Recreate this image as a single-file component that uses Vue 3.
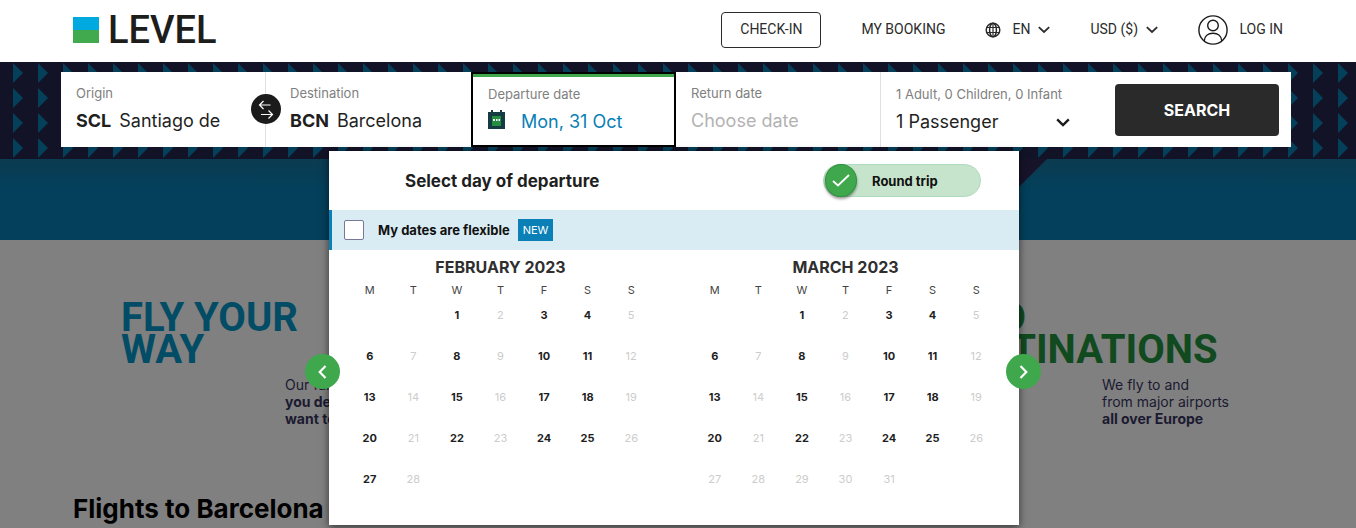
<script setup>
import { ref } from 'vue'

const weekdays = ['M', 'T', 'W', 'T', 'F', 'S', 'S']

function buildMonth(name, total, lastOpen) {
  const weeks = []
  for (let start = -1; start <= total; start += 7) {
    const week = []
    for (let i = 0; i < 7; i++) {
      const day = start + i
      const inMonth = day >= 1 && day <= total
      const open = [0, 2, 4, 5].includes(i) && day <= lastOpen
      week.push({ day: inMonth ? day : null, open })
    }
    weeks.push(week)
  }
  return { name, weeks }
}

const months = [buildMonth('FEBRUARY 2023', 28, 28), buildMonth('MARCH 2023', 31, 25)]

const origin = ref('Santiago de')
const destination = ref('Barcelona')
const departure = ref('Mon, 31 Oct')
const flexible = ref(false)
const roundTrip = ref(true)
</script>

<template>
  <div class="page">
    <header class="topbar">
      <a class="logo" href="#" aria-label="LEVEL">
        <span class="mark"></span>
        <span class="wordmark">LEVEL</span>
      </a>
      <nav class="nav">
        <a class="checkin" href="#">CHECK-IN</a>
        <a class="booking" href="#">MY BOOKING</a>
        <label class="picker language">
          <svg width="16" height="16" viewBox="0 0 16 16" fill="none" stroke="#2b2b2b" stroke-width="1.5">
            <circle cx="8" cy="8" r="6.800" />
            <ellipse cx="8" cy="8" rx="3.400" ry="6.800" />
            <path d="M8 1v14M1.800 5.500h12.400M1.800 10.500h12.400" stroke-width="1.200" />
          </svg>
          <select aria-label="Language"><option>EN</option></select>
          <svg class="chevron" width="12" height="8" viewBox="0 0 12 8" fill="none" stroke="#2b2b2b" stroke-width="1.800"><path d="M.8 1.200 6 6l5.200-4.800" /></svg>
        </label>
        <label class="picker">
          <select aria-label="Currency"><option>USD ($)</option></select>
          <svg class="chevron" width="12" height="8" viewBox="0 0 12 8" fill="none" stroke="#2b2b2b" stroke-width="1.800"><path d="M.8 1.200 6 6l5.200-4.800" /></svg>
        </label>
        <a class="login" href="#">
          <svg width="30" height="30" viewBox="0 0 30 30" fill="none" stroke="#1b1b1b" stroke-width="1.4">
            <circle cx="15" cy="15" r="14.1" />
            <circle cx="15" cy="10.5" r="5.3" />
            <path d="M6.2 26C6.500 21.200 10 18.300 15 18.300S23.500 21.200 23.800 26" />
          </svg>
          <span>LOG IN</span>
        </a>
      </nav>
    </header>

    <section class="band">
      <form class="search" @submit.prevent>
        <div class="field">
          <label for="origin">Origin</label>
          <div class="value"><strong>SCL</strong><input id="origin" v-model="origin" type="text" /></div>
        </div>
        <div class="field divided">
          <label for="destination">Destination</label>
          <div class="value"><strong>BCN</strong><input id="destination" v-model="destination" type="text" /></div>
          <button class="swap" type="button" aria-label="Swap origin and destination">
            <svg width="30" height="30" viewBox="0 0 30 30" fill="none" stroke="#fff" stroke-width="1.2">
              <path d="M19.500 11H8.500M12.500 7l-4 4 4 4M10 20.500h11.500M17.500 16.500l4 4-4 4" />
            </svg>
          </button>
        </div>
        <div class="field active">
          <label for="departure">Departure date</label>
          <div class="value">
            <svg width="17" height="19" viewBox="0 0 17 19">
              <path d="M0 2h3V0h2v2h7V0h2v2h3v17H0z" fill="#163c43" />
              <path d="M4 6h9v10H4z" fill="#239040" />
              <path d="M5 9h2v2H5zM8 9h1.500v2H8zM10.500 9H12v2h-1.500z" fill="#fff" />
            </svg>
            <input id="departure" v-model="departure" type="text" />
          </div>
        </div>
        <div class="field">
          <label for="return">Return date</label>
          <div class="value"><input id="return" type="text" placeholder="Choose date" /></div>
        </div>
        <div class="field divided passengers">
          <label for="passengers">1 Adult, 0 Children, 0 Infant</label>
          <div class="value">
            <select id="passengers"><option>1 Passenger</option></select>
            <svg width="14" height="9" viewBox="0 0 14 9" fill="none" stroke="#1b1b1b" stroke-width="2.4"><path d="M1.200 1.300 7 7l5.800-5.700" /></svg>
          </div>
        </div>
        <div class="submit"><button type="submit">SEARCH</button></div>

        <div class="calendar">
          <div class="calendar-head">
            <h2>Select day of departure</h2>
            <label class="toggle">
              <input v-model="roundTrip" type="checkbox" />
              <span class="knob">
                <svg width="18" height="13" viewBox="0 0 18 13" fill="none" stroke="#fff" stroke-width="1.8"><path d="M1 7l5 4.500L17 1" /></svg>
              </span>
              Round trip
            </label>
          </div>
          <div class="flexible">
            <input id="flexible" v-model="flexible" type="checkbox" />
            <label for="flexible">My dates are flexible</label>
            <span class="badge">NEW</span>
          </div>
          <div class="months">
            <div v-for="month in months" :key="month.name" class="month">
              <h3>{{ month.name }}</h3>
              <table>
                <thead>
                  <tr><th v-for="(d, i) in weekdays" :key="i" scope="col">{{ d }}</th></tr>
                </thead>
                <tbody>
                  <tr v-for="(week, w) in month.weeks" :key="w">
                    <td v-for="(cell, c) in week" :key="c">
                      <button v-if="cell.day" type="button" :disabled="!cell.open">{{ cell.day }}</button>
                    </td>
                  </tr>
                </tbody>
              </table>
            </div>
          </div>
          <button class="step prev" type="button" aria-label="Previous month">
            <svg width="9" height="14" viewBox="0 0 9 14" fill="none" stroke="#fff" stroke-width="2.200"><path d="M7.500 1 1.700 7l5.800 6" /></svg>
          </button>
          <button class="step next" type="button" aria-label="Next month">
            <svg width="9" height="14" viewBox="0 0 9 14" fill="none" stroke="#fff" stroke-width="2.200"><path d="M1.500 1l5.800 6-5.800 6" /></svg>
          </button>
        </div>
      </form>
    </section>

    <div class="hero"><span class="corner"></span></div>

    <main class="content">
      <div class="promos">
        <article class="way">
          <h2>FLY YOUR<br />WAY</h2>
          <p>Our fares<br /><b>you decide</b><br /><b>want to</b></p>
        </article>
        <article class="places">
          <h2>FIND<br />DESTINATIONS</h2>
          <p>We fly to and<br />from major airports<br /><b>all over Europe</b></p>
        </article>
      </div>
      <h1>Flights to Barcelona</h1>
    </main>
  </div>
</template>

<style>
body {
  background: #808080;
}
</style>

<style scoped>
.page {
  min-height: 100vh;
  font-family: Inter, Roboto, sans-serif;
  color: #1f1f1f;
  background: #808080;
}
.page * {
  box-sizing: border-box;
}
h1, h2, h3, p {
  margin: 0;
}
a {
  color: inherit;
  text-decoration: none;
}
button, input, select {
  font: inherit;
  color: inherit;
  border: 0;
  padding: 0;
  margin: 0;
  background: none;
}
select {
  appearance: none;
}
svg {
  display: block;
  flex: none;
}

.topbar {
  display: flex;
  justify-content: space-between;
  align-items: center;
  height: 62px;
  padding: 0 73px 2px;
  background: #fff;
}
.logo {
  display: flex;
  align-items: center;
  gap: 9px;
}
.mark {
  width: 26px;
  height: 26px;
  background: linear-gradient(#00a9e0 50%, #41a94e 50%);
}
.wordmark {
  font: 500 38px/40px Roboto, sans-serif;
  color: #1d1d1b;
}
.nav {
  display: flex;
  align-items: center;
  gap: 40px;
  font: 14px/20px Roboto, sans-serif;
  color: #2b2b2b;
}
.checkin {
  padding: 6px 18px 8px;
  border: 1px solid #2b2b2b;
  border-radius: 4px;
}
.booking, .nav select, .login span {
  padding-bottom: 2px;
}
.picker, .login {
  display: flex;
  align-items: center;
  gap: 8px;
}
.language, .login {
  gap: 11px;
}
.language .chevron {
  margin-left: -3px;
}

.band {
  padding: 10px 65px 12px 61px;
  background: url("data:image/svg+xml,%3Csvg xmlns='http://www.w3.org/2000/svg' width='25' height='25'%3E%3Cpath d='M13 1l10 10-10 10z' fill='%23044059'/%3E%3C/svg%3E") #121327;
}
.search {
  position: relative;
  display: grid;
  grid-template-columns: 204fr 206fr 205fr 204fr 223fr 188fr;
  height: 75px;
  background: #fff;
}
.field {
  position: relative;
  min-width: 0;
  padding: 13px 15px 0;
}
.divided {
  border-left: 1px solid #e0e0e0;
}
.field label {
  display: block;
  font-size: 13px;
  line-height: 16px;
  color: #808080;
  white-space: nowrap;
}
.value {
  display: flex;
  align-items: center;
  gap: 8px;
  margin-top: 8px;
  font-size: 18px;
  line-height: 24px;
}
.value input {
  width: 100%;
  min-width: 0;
  height: 24px;
}
.value input::placeholder {
  color: #b3b3b3;
  opacity: 1;
}
.divided {
  padding-left: 24px;
}
.swap {
  position: absolute;
  left: -15px;
  top: 22px;
  width: 30px;
  height: 30px;
  border-radius: 50%;
  background: #1b1b1b;
}
.active {
  border: 2px solid #000;
  padding-top: 12px;
}
.active::before {
  content: "";
  position: absolute;
  inset: 0 0 auto;
  height: 3px;
  background: #3fa74c;
}
.active .value {
  align-items: flex-start;
  gap: 16px;
  color: #0a80b6;
}
.passengers {
  padding: 14px 15px 0;
}
.passengers .value {
  justify-content: space-between;
  padding-right: 18px;
}
.submit {
  padding: 12px 12px 11px;
}
.submit button {
  width: 100%;
  height: 100%;
  border-radius: 4px;
  background: #2a2a2a;
  color: #fff;
  font-size: 16px;
  font-weight: 700;
}

.calendar {
  position: absolute;
  z-index: 2;
  top: 79px;
  left: calc(50% - 347px);
  width: 690px;
  background: #fff;
  box-shadow: 0 2px 8px rgba(0, 0, 0, 0.6);
  padding-bottom: 13px;
}
.calendar-head {
  display: flex;
  align-items: center;
  justify-content: space-between;
  height: 59px;
  padding: 0 38px 0 76px;
}
.calendar-head h2 {
  font-size: 17px;
  line-height: 20px;
  font-weight: 700;
}
.toggle {
  position: relative;
  display: flex;
  align-items: center;
  gap: 15px;
  width: 158px;
  height: 33px;
  padding-left: 1px;
  border: 1px solid #b0dabd;
  border-radius: 17px;
  background: #c6e4cb;
  font-size: 13px;
  font-weight: 700;
  color: #111;
}
.toggle input {
  position: absolute;
  inset: 0;
  opacity: 0;
}
.knob {
  display: grid;
  place-items: center;
  width: 32px;
  height: 33px;
  border: 1px solid #2e9340;
  border-radius: 50%;
  background: #3fa74c;
  box-shadow: 0 2px 3px rgba(0, 0, 0, 0.4);
}
.flexible {
  display: flex;
  align-items: center;
  height: 40px;
  padding-left: 12px;
  border-left: 3px solid #0a80b6;
  background: #d9ecf3;
  font-size: 13px;
}
.flexible input {
  appearance: none;
  width: 20px;
  height: 20px;
  border: 1px solid #77779a;
  border-radius: 2px;
  background: #fff;
}
.flexible label {
  margin: 0 8px 0 14px;
  font-weight: 700;
  color: #111;
}
.badge {
  padding: 3px 5px;
  background: #0a80b6;
  color: #fff;
  font-size: 11px;
  line-height: 16px;
}
.months {
  display: grid;
  grid-template-columns: 1fr 1fr;
}
.month {
  padding: 7px 21px 0 19px;
}
.month h3 {
  margin-bottom: 5px;
  font-size: 16px;
  line-height: 20px;
  font-weight: 700;
  text-align: center;
  color: #2f2f2f;
}
table {
  width: 100%;
  table-layout: fixed;
  border-collapse: collapse;
  font-size: 11px;
  line-height: 16px;
  text-align: center;
}
th, td {
  padding: 0;
  vertical-align: top;
}
th {
  height: 25px;
  font-weight: 400;
  color: #444;
}
td {
  height: 41px;
}
td button {
  display: block;
  width: 100%;
  font-weight: 700;
}
td button:disabled {
  font-weight: 400;
  color: #ccc;
}
.step {
  position: absolute;
  top: 203px;
  display: grid;
  place-items: center;
  width: 35px;
  height: 35px;
  border-radius: 50%;
  background: #3fa74c;
}
.prev {
  left: -24px;
}
.next {
  right: -22px;
}

.hero {
  position: relative;
  height: 81px;
  background: linear-gradient(#0b3b50, #04405b 30px);
}
.corner {
  position: absolute;
  top: 0;
  right: calc(50% - 369px);
  width: 81px;
  height: 81px;
  background: #17142a;
  clip-path: polygon(0 0, 100% 0, 0 100%);
}

.content {
  padding: 62px 0 3px;
}
.promos {
  display: grid;
  grid-template-columns: 817fr 418fr;
  padding-left: 121px;
}
.promos h2 {
  font: 700 40px/32px Roboto, sans-serif;
}
.promos p {
  margin-top: 10px;
  font-size: 14px;
  line-height: 17px;
  white-space: nowrap;
  color: #1b1a30;
}
.way h2 {
  color: #034c66;
}
.way p {
  margin-left: 164px;
}
.places h2 {
  color: #124a20;
}
.places p {
  margin-left: 164px;
}
h1 {
  margin-top: 67px;
  padding-left: 73px;
  font-size: 26px;
  line-height: 30px;
  font-weight: 700;
  color: #000;
}
</style>
